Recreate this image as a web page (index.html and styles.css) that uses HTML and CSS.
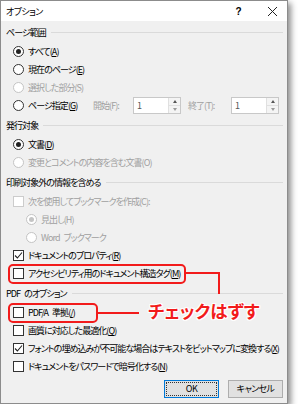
FILE: index.html
```html
<!DOCTYPE html>
<html lang="ja">
<head>
<meta charset="utf-8">
<link rel="stylesheet" href="styles.css">
</head>
<body>
<div class="dialog">
  <div class="titlebar">
    <span class="title">オプション</span>
    <span class="help">?</span>
    <svg class="close" width="11" height="11" viewBox="0 0 11 11"><path d="M1 1L10 10M10 1L1 10" stroke="#222" stroke-width="1"/></svg>
  </div>
  <div class="content">
    <div class="ghead first"><span>ページ範囲</span><i class="rule"></i></div>
    <div class="row"><span class="radio on"></span><span>すべて(<u>A</u>)</span></div>
    <div class="row"><span class="radio"></span><span>現在のページ(<u>E</u>)</span></div>
    <div class="row dis"><span class="radio"></span><span>選択した部分(S)</span></div>
    <div class="row"><span class="radio"></span><span class="pg">ページ指定(<u>G</u>)</span>
      <span class="lbl l1">開始(F):</span>
      <span class="spin"><span class="val">1</span><span class="arrows"><i class="up"></i><i class="dn"></i></span></span>
      <span class="lbl l2">終了(T):</span>
      <span class="spin"><span class="val">1</span><span class="arrows"><i class="up"></i><i class="dn"></i></span></span>
    </div>

    <div class="ghead"><span>発行対象</span><i class="rule"></i></div>
    <div class="row g2"><span class="radio on"></span><span>文書(<u>D</u>)</span></div>
    <div class="row dis"><span class="radio"></span><span>変更とコメントの内容を含む文書(O)</span></div>

    <div class="ghead"><span>印刷対象外の情報を含める</span><i class="rule"></i></div>
    <div class="row dis"><span class="check"></span><span>次を使用してブックマークを作成(C):</span></div>
    <div class="row dis sub"><span class="radio on"></span><span>見出し(H)</span></div>
    <div class="row dis sub"><span class="radio"></span><span>Word ブックマーク</span></div>
    <div class="row"><span class="check on"><svg width="9" height="9" viewBox="0 0 9 9"><path d="M1 4.5L3.4 7L8 1.5" fill="none" stroke="#222" stroke-width="1.1"/></svg></span><span>ドキュメントのプロパティ(<u>R</u>)</span></div>
    <div class="row"><span class="check"></span><span>アクセシビリティ用のドキュメント構造タグ(<u>M</u>)</span></div>

    <div class="ghead"><span>PDF のオプション</span><i class="rule"></i></div>
    <div class="row"><span class="check"></span><span>PDF/A 準拠(<u>/</u>)</span></div>
    <div class="row"><span class="check"></span><span>画質に対応した最適化(<u>Q</u>)</span></div>
    <div class="row"><span class="check on"><svg width="9" height="9" viewBox="0 0 9 9"><path d="M1 4.5L3.4 7L8 1.5" fill="none" stroke="#222" stroke-width="1.1"/></svg></span><span>フォントの埋め込みが不可能な場合はテキストをビットマップに変換する(<u>X</u>)</span></div>
    <div class="row"><span class="check"></span><span>ドキュメントをパスワードで暗号化する(<u>N</u>)</span></div>
  </div>
  <div class="buttons">
    <button class="btn ok"><span>OK</span></button>
    <button class="btn">キャンセル</button>
  </div>

  <div class="hl hl1"></div>
  <div class="wire w1"></div>
  <div class="hl hl2"></div>
  <div class="wire w2"></div>
  <div class="callout">チェックはずす</div>
</div>
</body>
</html>
```
FILE: styles.css
```css
* { box-sizing: border-box; }
body {
  margin: 0;
  background: #ffffff;
  font-family: "Noto Sans CJK JP", "Noto Sans", sans-serif;
  font-feature-settings: "palt";
  color: #000;
}
.dialog {
  position: relative;
  width: 288px;
  height: 404px;
  background: #f0f0f0;
  border: 1px solid #8c8c8c;
  box-shadow: 3px 3px 6px rgba(0,0,0,0.45);
  display: flex;
  flex-direction: column;
}
.titlebar {
  height: 23px;
  background: #ffffff;
  display: flex;
  align-items: center;
  padding-left: 5px;
  padding-top: 2px;
  font-size: 9px;
  letter-spacing: -0.6px;
}
.title { flex: 1; }
.help { font-family: "Liberation Sans", sans-serif; font-weight: 700; font-size: 10px; margin-right: 26px; }
.close { margin-right: 9px; }
.content {
  flex: 1;
  padding: 2px 4px 0 5px;
  font-size: 9px;
  letter-spacing: -0.95px;
  word-spacing: 3px;
  white-space: nowrap;
}
.ghead {
  display: flex;
  align-items: center;
  height: 18px;
  margin-top: 2px;
  margin-bottom: 1px;
}
.ghead.first { margin-top: 1px; }
.ghead .rule {
  flex: 1;
  height: 1px;
  background: #dadada;
  margin-left: 5px;
}
.row {
  display: flex;
  align-items: center;
  height: 18px;
  padding-left: 7px;
}
.row.g2 { margin-top: 1px; }
.row.sub { padding-left: 20px; }
.row.dis { color: #a0a0a0; }
u { text-decoration: underline; text-underline-offset: 1px; }
.radio {
  width: 11px;
  height: 11px;
  border: 1px solid #333;
  border-radius: 50%;
  background: #fff;
  margin-right: 4px;
  display: flex;
  align-items: center;
  justify-content: center;
  flex: none;
}
.radio.on::after {
  content: "";
  width: 5px;
  height: 5px;
  border-radius: 50%;
  background: #222;
}
.dis .radio { border-color: #c4c4c4; }
.dis .radio.on::after { background: #c4c4c4; }
.check {
  width: 11px;
  height: 11px;
  border: 1px solid #333;
  background: #fff;
  margin-right: 4px;
  display: flex;
  align-items: center;
  justify-content: center;
  flex: none;
}
.dis .check { border-color: #cccccc; }
.pg { width: 65px; }
.lbl { color: #a0a0a0; }
.l1 { width: 40px; }
.l2 { width: 43px; margin-left: 7px; }
.spin {
  width: 48px;
  height: 17px;
  border: 1px solid #c8c8c8;
  background: #fff;
  display: flex;
  color: #555;
}
.spin .val { flex: 1; padding-left: 3px; line-height: 15px; }
.arrows {
  width: 12px;
  display: flex;
  flex-direction: column;
  border-left: 1px solid #e0e0e0;
}
.arrows i {
  flex: 1;
  display: flex;
  align-items: center;
  justify-content: center;
  background: #f4f4f4;
}
.arrows i.up { border-bottom: 1px solid #e0e0e0; }
.arrows i.up::after {
  content: "";
  border-left: 2.5px solid transparent;
  border-right: 2.5px solid transparent;
  border-bottom: 3px solid #555;
}
.arrows i.dn::after {
  content: "";
  border-left: 2.5px solid transparent;
  border-right: 2.5px solid transparent;
  border-top: 3px solid #9a9a9a;
}
.buttons {
  height: 31px;
  display: flex;
  justify-content: flex-end;
  align-items: flex-start;
  gap: 9px;
  padding-right: 4px;
  padding-top: 4px;
}
.btn {
  width: 55px;
  height: 18px;
  background: #e1e1e1;
  border: 1px solid #adadad;
  font-family: "Noto Sans CJK JP", sans-serif;
  font-feature-settings: "palt";
  font-size: 9px;
  letter-spacing: -0.6px;
  color: #000;
  padding: 0;
  margin: 0;
  display: flex;
  align-items: center;
  justify-content: center;
}
.btn.ok {
  border: 1px solid #0078d7;
  padding: 1px;
}
.btn.ok span {
  width: 100%;
  height: 100%;
  border: 1px dotted #333;
  display: flex;
  align-items: center;
  justify-content: center;
}
.hl {
  position: absolute;
  border: 2px solid #f21b1b;
  border-radius: 5px;
}
.hl1 { left: 7px; top: 263px; width: 178px; height: 20px; }
.hl2 { left: 7px; top: 302px; width: 90px; height: 20px; }
.wire { position: absolute; border-color: #f21b1b; border-style: solid; border-width: 0; }
.w1 { left: 184px; top: 271px; width: 35px; height: 22px; border-top-width: 2px; border-right-width: 2px; }
.w2 { left: 96px; top: 311px; width: 42px; height: 2px; background: #f21b1b; }
.callout {
  position: absolute;
  left: 147px;
  top: 298px;
  font-size: 17.5px;
  font-weight: 700;
  color: #f21b1b;
  line-height: 24px;
  text-shadow: 1px 0 #fff, -1px 0 #fff, 0 1px #fff, 0 -1px #fff, 1px 1px #fff, -1px -1px #fff, 1px -1px #fff, -1px 1px #fff;
}
```
